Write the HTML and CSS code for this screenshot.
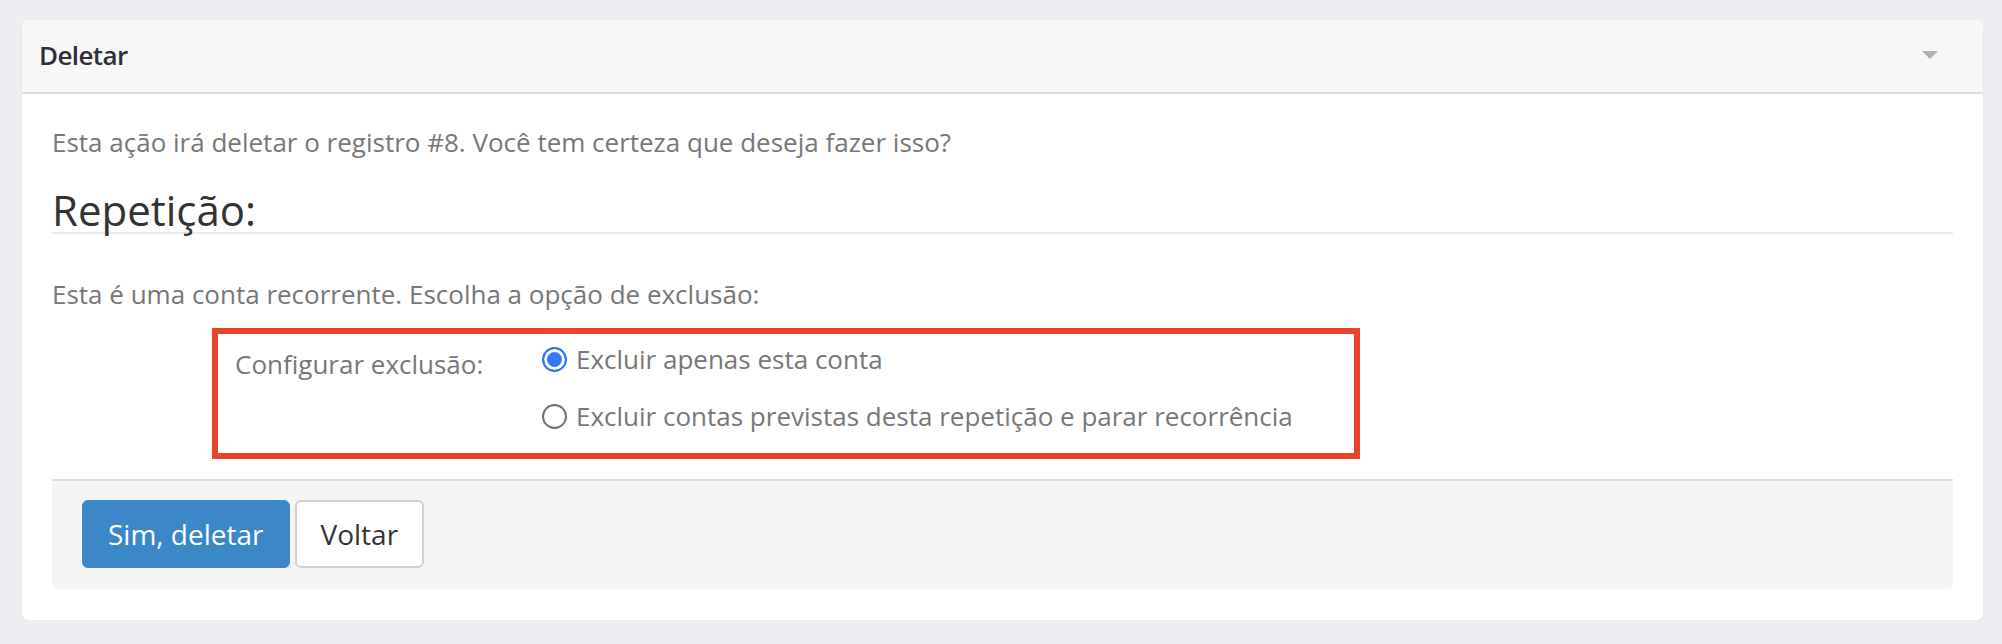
FILE: index.html
```html
<!DOCTYPE html>
<html lang="pt-BR">
<head>
<meta charset="utf-8">
<title>Deletar</title>
<link rel="stylesheet" href="styles.css">
</head>
<body>
<div class="card">
  <div class="card-header">
    <span class="card-title">Deletar</span>
    <span class="caret"></span>
  </div>
  <div class="card-body">
    <p class="text">Esta ação irá deletar o registro #8. Você tem certeza que deseja fazer isso?</p>
    <h2 class="section-title">Repetição:</h2>
    <p class="text text-gap">Esta é uma conta recorrente. Escolha a opção de exclusão:</p>
    <div class="options-box">
      <label class="options-label">Configurar exclusão:</label>
      <div class="options-list">
        <label class="option"><input type="radio" name="exc" class="radio" checked><span>Excluir apenas esta conta</span></label>
        <label class="option"><input type="radio" name="exc" class="radio"><span>Excluir contas previstas desta repetição e parar recorrência</span></label>
      </div>
    </div>
    <div class="card-footer">
      <button class="btn btn-primary">Sim, deletar</button>
      <button class="btn btn-default">Voltar</button>
    </div>
  </div>
</div>
</body>
</html>
```
FILE: styles.css
```css
* { box-sizing: border-box; }
html, body { margin: 0; }
body {
  background: #edeef2;
  padding: 20px 19px 0 22px;
  font-family: "Open Sans", "Noto Sans", sans-serif;
  color: #777;
}
.card {
  background: #fff;
  border-radius: 6px;
  box-shadow: 0 1px 2px rgba(0,0,0,0.08);
  overflow: hidden;
}
.card-header {
  height: 74px;
  background: #f7f7f7;
  border-bottom: 2px solid #dcdcdc;
  display: flex;
  align-items: center;
  justify-content: space-between;
  padding: 0 45px 2px 17px;
}
.card-title {
  font-size: 26px;
  font-weight: 600;
  color: #2e3038;
  letter-spacing: -0.6px;
}
.caret {
  width: 0;
  height: 0;
  border-left: 8px solid transparent;
  border-right: 8px solid transparent;
  border-top: 8px solid #b0b0b0;
}
.card-body {
  padding: 30px 30px 31px 30px;
}
.text {
  margin: 0;
  font-size: 26px;
  line-height: 37px;
  color: #777;
}
.section-title {
  margin: 26px 0 0;
  font-size: 42px;
  font-weight: 400;
  line-height: 45px;
  color: #333;
  border-bottom: 2px solid #ebebeb;
}
.text-gap { margin-top: 42px; }
.options-box {
  margin: 15px 0 0 160px;
  width: 1148px;
  border: 6px solid #e8432b;
  padding: 7px 0 18px 17px;
  display: flex;
}
.options-label {
  width: 307px;
  flex: none;
  margin-top: 5px;
  font-size: 26px;
  line-height: 37px;
  color: #777;
}
.options-list {
  display: flex;
  flex-direction: column;
  gap: 20px;
}
.option {
  display: flex;
  align-items: center;
  font-size: 26px;
  line-height: 37px;
  color: #777;
}
.radio {
  appearance: none;
  -webkit-appearance: none;
  width: 25px;
  height: 25px;
  margin: 0 9px 0 0;
  border-radius: 50%;
  border: 2px solid #707070;
  background: #fff;
  flex: none;
}
.radio:checked {
  border-color: #2f74f0;
  background: #3478f6;
  box-shadow: inset 0 0 0 3px #fff;
}
.card-footer {
  margin-top: 20px;
  background: #f5f5f5;
  border-top: 2px solid #dedede;
  border-radius: 0 0 6px 6px;
  padding: 19px 30px 21px;
  display: flex;
  gap: 5px;
}
.btn {
  height: 68px;
  font-family: "Open Sans", "Noto Sans", sans-serif;
  font-size: 28px;
  border-radius: 6px;
  white-space: nowrap;
  cursor: pointer;
}
.btn-primary {
  background: #3c87c7;
  border: 1px solid #3c87c7;
  color: #fff;
  padding: 0 25px;
}
.btn-default {
  background: #fff;
  border: 2px solid #cfcfcf;
  color: #333;
  padding: 0 24px;
}
```
